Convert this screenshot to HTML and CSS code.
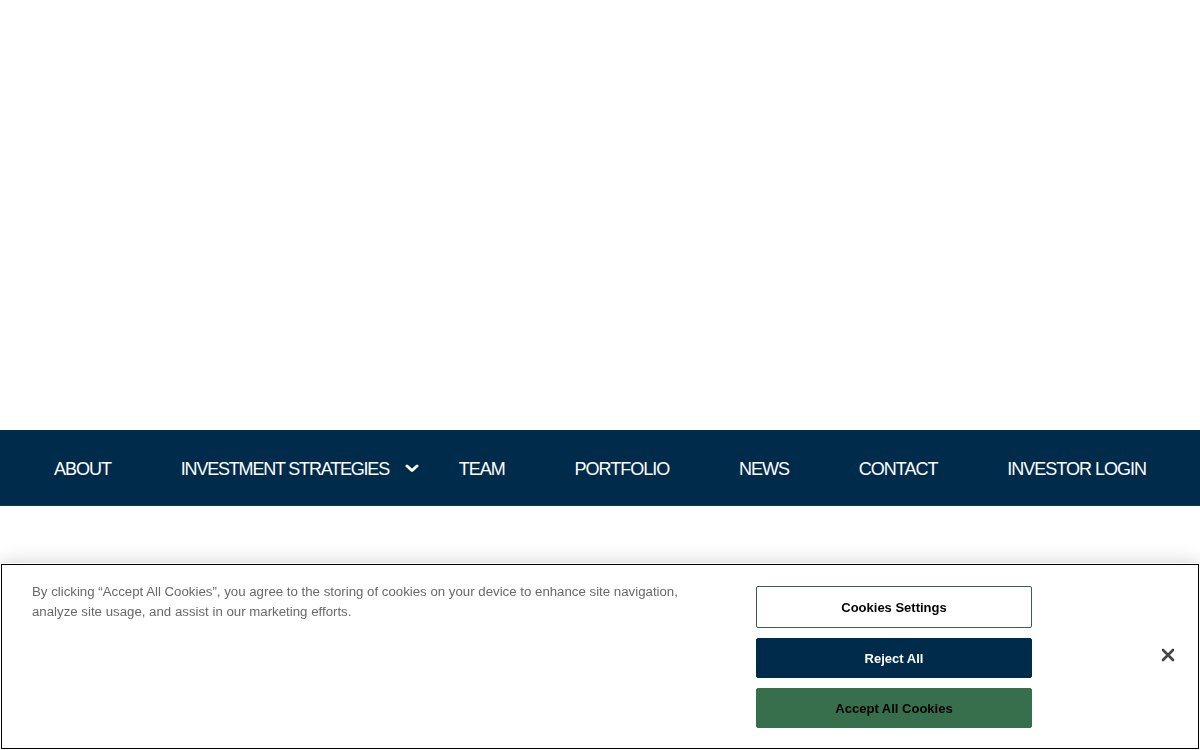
FILE: index.html
```html
<!DOCTYPE html>
<html lang="en">
<head>
  <meta charset="UTF-8">
  <title>Home</title>
  <link rel="stylesheet" href="styles.css">
</head>
<body>
  <header class="hero"></header>

  <nav class="main-nav">
    <a href="#" class="nav-link">ABOUT</a>
    <a href="#" class="nav-link has-menu">INVESTMENT STRATEGIES
      <svg class="chevron" viewBox="0 0 14 9" width="14" height="9" aria-hidden="true">
        <path d="M2 2 L7 6.5 L12 2" fill="none" stroke="#fff" stroke-width="3" stroke-linecap="round" stroke-linejoin="round"/>
      </svg>
    </a>
    <a href="#" class="nav-link">TEAM</a>
    <a href="#" class="nav-link">PORTFOLIO</a>
    <a href="#" class="nav-link">NEWS</a>
    <a href="#" class="nav-link">CONTACT</a>
    <a href="#" class="nav-link">INVESTOR LOGIN</a>
  </nav>

  <main class="content"></main>

  <!-- consent bar, stays pinned to the bottom of the window -->
  <div class="cookie-bar" id="cookieBar">
    <p class="cookie-text">
      By clicking “Accept All Cookies”, you agree to the storing of cookies on your device to enhance site navigation, analyze site usage, and assist in our marketing efforts.
    </p>
    <div class="cookie-actions">
      <button class="cookie-btn settings">Cookies Settings</button>
      <button class="cookie-btn reject">Reject All</button>
      <button class="cookie-btn accept">Accept All Cookies</button>
    </div>
    <div class="cookie-close">
      <button class="close-btn" aria-label="Close">
        <svg viewBox="0 0 14 14" width="14" height="14" aria-hidden="true">
          <path d="M2 2 L12 12 M12 2 L2 12" stroke="#444" stroke-width="2.6" stroke-linecap="round"/>
        </svg>
      </button>
    </div>
  </div>
</body>
</html>
```

FILE: styles.css
```css
body {
  margin: 0;
  font-family: "Liberation Sans", Arial, Helvetica, sans-serif;
  background: #fff;
}

.hero {
  height: 430px;
}

.main-nav {
  display: flex;
  justify-content: space-between;
  align-items: center;
  height: 75px;
  padding: 0 54px;
  background-color: #012b4a;
  border-bottom: 1px solid #0d3b55;
}

.nav-link {
  position: relative;
  color: #fff;
  text-decoration: none;
  font-size: 18px;
  letter-spacing: -1px;
  padding-top: 4px;
}

.has-menu {
  letter-spacing: -1.2px;
}

/* dropdown arrow sits in the gap after the link */
.chevron {
  position: absolute;
  left: calc(100% + 16px);
  top: 9px;
}

.content {
  height: 244px;
}

.cookie-bar {
  position: fixed;
  left: 0;
  right: 0;
  bottom: 0;
  display: flex;
  align-items: flex-start;
  padding: 23px 0 22px 32px;
  background: #fff;
  outline: 1px solid #000;
  outline-offset: -2px;
  box-shadow: 0 0 18px rgba(0, 0, 0, 0.18);
}

.cookie-text {
  width: 690px;
  margin: -4px 34px 0 0;
  font-size: 13.25px;
  line-height: 20px;
  color: #696969;
}

.cookie-actions {
  display: flex;
  flex-direction: column;
  gap: 10px;
  width: 276px;
}

.cookie-btn {
  height: 40px;
  border-radius: 2px;
  font-family: inherit;
  font-size: 13px;
  font-weight: bold;
  cursor: pointer;
}

.cookie-btn.settings {
  background: #fff;
  color: #000;
  border: 1px solid #3d5c4c;
  height: 42px;
}

.cookie-btn.reject {
  background: #012b4a;
  color: #fff;
  border: 1px solid #012b4a;
}

.cookie-btn.accept {
  background: #376e4c;
  color: #000;
  border: 1px solid #376e4c;
}

.cookie-close {
  flex: 1;
  display: flex;
  justify-content: flex-end;
  padding: 62px 25px 0 0;
}

.close-btn {
  background: none;
  border: 0;
  padding: 0;
  width: 14px;
  height: 14px;
  cursor: pointer;
}

.close-btn svg {
  display: block;
}
```
